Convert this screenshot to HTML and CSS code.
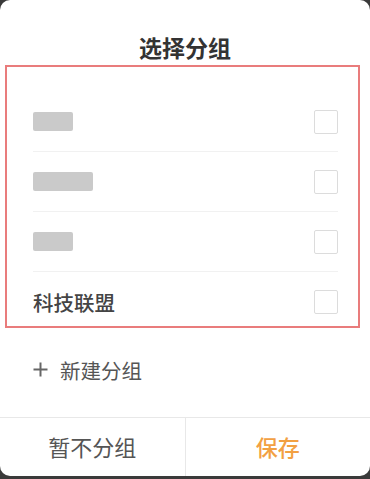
FILE: index.html
```html
<!DOCTYPE html>
<html lang="zh">
<head>
<meta charset="utf-8">
<link rel="stylesheet" href="styles.css">
</head>
<body>
<div class="card">
  <div class="title">选择分组</div>
  <div class="box">
    <div class="row">
      <span class="blur w40"></span>
      <span class="check"></span>
    </div>
    <div class="row">
      <span class="blur w60"></span>
      <span class="check"></span>
    </div>
    <div class="row">
      <span class="blur w40"></span>
      <span class="check"></span>
    </div>
    <div class="row last">
      <span class="name">科技联盟</span>
      <span class="check"></span>
    </div>
  </div>
  <div class="add">
    <svg class="plus" width="15" height="15" viewBox="0 0 15 15"><path d="M7.5 0.5V14.5M0.5 7.5H14.5" stroke="#666" stroke-width="2" fill="none"/></svg>
    <span>新建分组</span>
  </div>
  <div class="actions">
    <div class="btn">暂不分组</div>
    <div class="btn save">保存</div>
  </div>
</div>
</body>
</html>
```
FILE: styles.css
```css
html, body {
  margin: 0;
  padding: 0;
  background: #3a3a3a;
  font-family: "Noto Sans CJK SC", "Noto Sans", sans-serif;
}
.card {
  width: 370px;
  height: 476px;
  background: #fff;
  border-radius: 10px;
  display: flex;
  flex-direction: column;
  overflow: hidden;
}
.title {
  height: 65px;
  box-sizing: border-box;
  padding-top: 33px;
  line-height: 28px;
  text-align: center;
  font-size: 23px;
  font-weight: 700;
  color: #333;
}
.box {
  margin-left: 5px;
  width: 355px;
  height: 263px;
  box-sizing: border-box;
  border: 2px solid #e97c7c;
  padding-top: 25px;
  overflow: hidden;
}
.row {
  height: 60px;
  margin: 0 20px 0 26px;
  display: flex;
  align-items: center;
  justify-content: space-between;
  border-bottom: 1px solid #f1f1f1;
  box-sizing: border-box;
}
.row.last {
  border-bottom: none;
}
.blur {
  display: block;
  height: 19px;
  background: #cacaca;
  border-radius: 2px;
}
.w40 { width: 40px; }
.w60 { width: 60px; }
.name {
  font-size: 20.5px;
  color: #444;
  font-weight: 500;
}
.check {
  width: 22px;
  height: 22px;
  border: 1px solid #dcdcdc;
  border-radius: 2px;
}
.add {
  height: 89px;
  display: flex;
  align-items: center;
  gap: 12px;
  padding-left: 33px;
  padding-bottom: 6px;
  box-sizing: border-box;
  font-size: 20.5px;
  color: #555;
}
.actions {
  flex: 1;
  display: flex;
  border-top: 1px solid #e8e8e8;
}
.btn {
  flex: 1;
  display: flex;
  align-items: center;
  justify-content: center;
  font-size: 22px;
  color: #555;
  padding-bottom: 2px;
}
.btn + .btn {
  border-left: 1px solid #e8e8e8;
}
.save {
  color: #f2a043;
  font-weight: 500;
}
```
